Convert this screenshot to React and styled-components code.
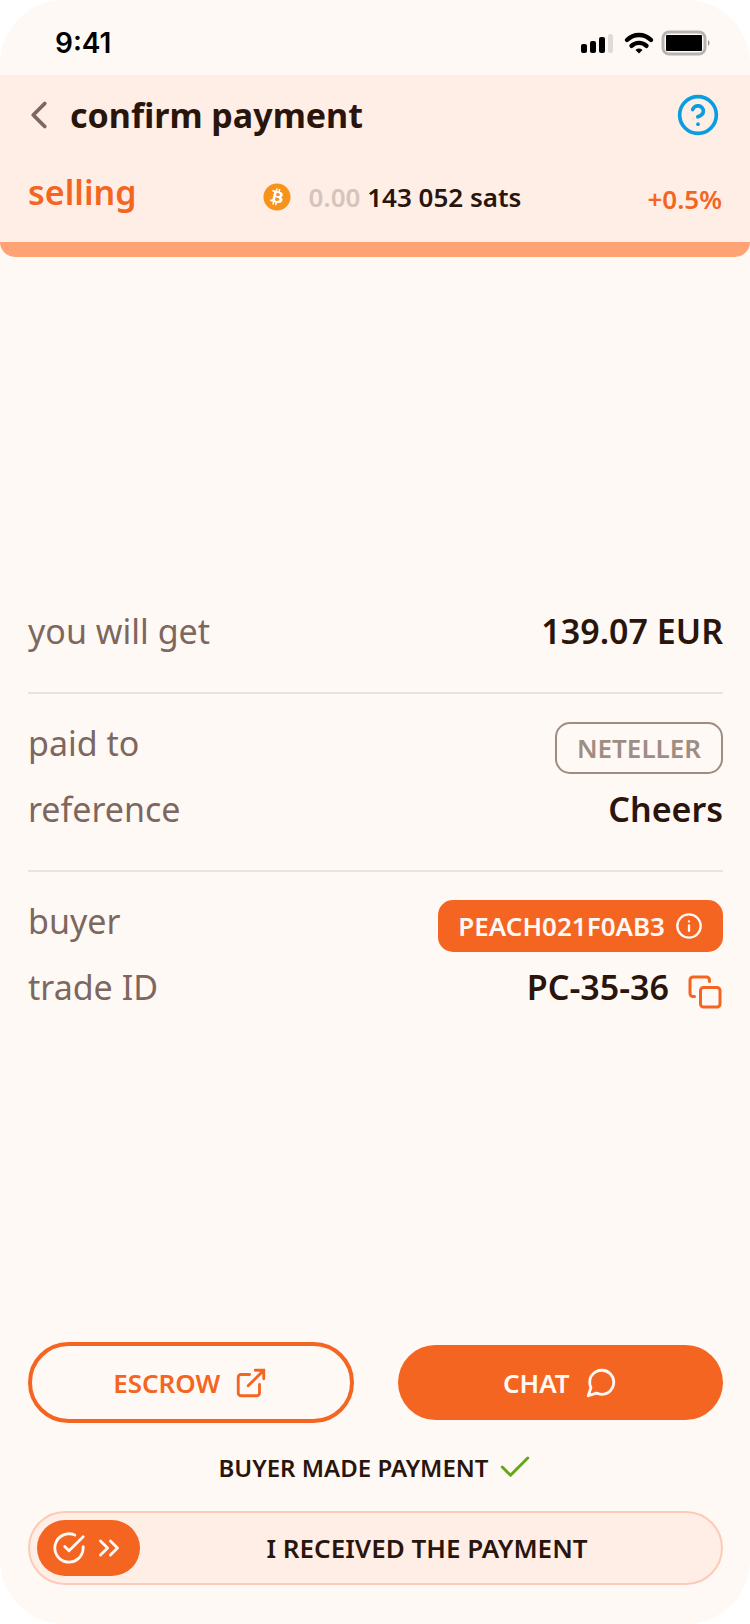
import React, { useState } from "react";
import styled, { createGlobalStyle } from "styled-components";
import { FaBitcoin } from "react-icons/fa";

const SLIDE_RANGE = 574;

const Icon = ({ size, weight = 2, children }) => (
  <svg
    width={size}
    height={size}
    viewBox="0 0 24 24"
    fill="none"
    stroke="currentColor"
    strokeWidth={weight}
    strokeLinecap="round"
    strokeLinejoin="round"
    aria-hidden="true"
  >
    {children}
  </svg>
);

const StatusIcons = () => (
  <svg width="132" height="28" viewBox="0 0 132 28" aria-hidden="true">
    <rect x="1" y="15" width="6" height="9" rx="2" />
    <rect x="10" y="12" width="6" height="12" rx="2" />
    <rect x="19" y="8" width="6" height="16" rx="2" />
    <rect x="28" y="5" width="5" height="19" rx="2" fill="#e0dbd8" />
    <g fill="none" stroke="#000" strokeWidth="4.400">
      <path d="M47 11a17 17 0 0 1 24 0" strokeLinecap="round" />
      <path d="M51.500 16.800a11 11 0 0 1 15 0" strokeLinecap="round" />
    </g>
    <path d="M55.500 21a5.500 5.500 0 0 1 7 0L59 24.500z" />
    <rect x="83" y="3" width="42" height="22" rx="6" fill="#fff9f5" stroke="#b7b3b1" strokeWidth="3" />
    <rect x="86" y="6" width="36" height="16" rx="1" />
    <path d="M128 11q3 3 0 6z" fill="#8e8a88" />
  </svg>
);

const App = () => {
  const [slide, setSlide] = useState(0);

  return (
    <Screen>
      <GlobalStyle />
      <StatusBar>
        <Time>9:41</Time>
        <StatusIcons />
      </StatusBar>

      <Header>
        <TitleRow>
          <IconButton aria-label="back" $color="#7d675e">
            <Icon size={46}>
              <path d="M15 18l-6-6 6-6" />
            </Icon>
          </IconButton>
          <Title>confirm payment</Title>
          <IconButton aria-label="help" $color="#099de2">
            <Icon size={44}>
              <circle cx="12" cy="12" r="10" />
              <path d="M9.090 9a3 3 0 0 1 5.830 1c0 2-3 3-3 3" />
              <path d="M12 17h.01" />
            </Icon>
          </IconButton>
        </TitleRow>
        <OfferRow>
          <Selling>selling</Selling>
          <Amount>
            <Coin>
              <FaBitcoin size={28} />
            </Coin>
            <Sats>
              <Faded>0.00</Faded> 143 052 sats
            </Sats>
          </Amount>
          <Premium>+0.5%</Premium>
        </OfferRow>
      </Header>

      <Main>
        <Section>
          <Row>
            <Label>you will get</Label>
            <Value>139.07 EUR</Value>
          </Row>
        </Section>
        <Section>
          <Row>
            <Label>paid to</Label>
            <Tag>NETELLER</Tag>
          </Row>
          <Row>
            <Label>reference</Label>
            <Value>Cheers</Value>
          </Row>
        </Section>
        <Section>
          <Row>
            <Label>buyer</Label>
            <BuyerButton>
              PEACH021F0AB3
              <Icon size={28}>
                <circle cx="12" cy="12" r="10" />
                <path d="M12 16v-4.500M12 8h.01" />
              </Icon>
            </BuyerButton>
          </Row>
          <Row>
            <Label>trade ID</Label>
            <Trade>
              <Value>PC-35-36</Value>
              <IconButton aria-label="copy trade ID" $color="#f56522">
                <Icon size={36}>
                  <rect x="9" y="9" width="13" height="13" rx="2" />
                  <path d="M5 15H4a2 2 0 0 1-2-2V4a2 2 0 0 1 2-2h9a2 2 0 0 1 2 2v1" />
                </Icon>
              </IconButton>
            </Trade>
          </Row>
        </Section>
      </Main>

      <Footer>
        <Actions>
          <ActionButton $outline>
            ESCROW
            <Icon size={34}>
              <path d="M18 13v6a2 2 0 0 1-2 2H5a2 2 0 0 1-2-2V8a2 2 0 0 1 2-2h6" />
              <path d="M15 3h6v6M10 14L21 3" strokeLinejoin="miter" />
            </Icon>
          </ActionButton>
          <ActionButton>
            CHAT
            <Icon size={34}>
              <path d="M21 11.500a8.380 8.380 0 0 1-.9 3.800 8.500 8.500 0 0 1-7.600 4.700 8.380 8.380 0 0 1-3.800-.9L3 21l1.900-5.700a8.380 8.380 0 0 1-.9-3.800 8.500 8.500 0 0 1 4.700-7.600 8.380 8.380 0 0 1 3.800-.9h.5a8.480 8.480 0 0 1 8 8v.5z" />
            </Icon>
          </ActionButton>
        </Actions>
        <Note>
          BUYER MADE PAYMENT
          <Check>
            <Icon size={36}>
              <path d="M20.500 6L9 17.500l-5.500-5.500" />
            </Icon>
          </Check>
        </Note>
        <Slider>
          <Thumb style={{ marginLeft: (slide / 100) * SLIDE_RANGE }}>
            <Icon size={34}>
              <path d="M22 11.080V12a10 10 0 1 1-5.930-9.140" />
              <path d="M22 4L12 14.010l-3-3" />
            </Icon>
            <Icon size={34}>
              <path d="M13 17l5-5-5-5M6 17l5-5-5-5" />
            </Icon>
          </Thumb>
          <SlideLabel htmlFor="received">I RECEIVED THE PAYMENT</SlideLabel>
          <SlideInput
            id="received"
            type="range"
            min="0"
            max="100"
            value={slide}
            onChange={(e) => setSlide(Number(e.target.value))}
          />
        </Slider>
      </Footer>
    </Screen>
  );
};

const GlobalStyle = createGlobalStyle`
  * {
    box-sizing: border-box;
  }
  body {
    margin: 0;
    background: #fff;
    color: #29150c;
    font-family: "Noto Sans", "Open Sans", sans-serif;
  }
  button {
    font: inherit;
    cursor: pointer;
  }
  svg {
    display: block;
    flex-shrink: 0;
  }
`;

const Screen = styled.div`
  display: flex;
  flex-direction: column;
  min-height: 100vh;
  overflow: hidden;
  border-radius: 64px;
  background: #fff9f5;
`;

const StatusBar = styled.div`
  display: flex;
  align-items: center;
  justify-content: space-between;
  height: 75px;
  padding: 10px 38px 0 55px;
`;

const Time = styled.span`
  color: #000;
  font-family: Inter, sans-serif;
  font-size: 28px;
  font-weight: 600;
`;

const Header = styled.header`
  border-bottom: 15px solid #ffa274;
  border-radius: 0 0 15px 15px;
  background: #ffeee6;
`;

const TitleRow = styled.div`
  display: flex;
  align-items: center;
  gap: 8px;
  height: 80px;
  padding: 0 30px 0 16px;
`;

const Title = styled.h1`
  flex: 1;
  margin: 0;
  font-size: 34px;
  font-weight: 700;
  line-height: 40px;
`;

const IconButton = styled.button`
  padding: 0;
  border: 0;
  background: none;
  color: ${(props) => props.$color};
`;

const OfferRow = styled.div`
  display: flex;
  align-items: flex-start;
  justify-content: space-between;
  height: 87px;
  padding: 16px 28px 0;
`;

const Selling = styled.span`
  color: #f56522;
  font-size: 34px;
  font-weight: 600;
  line-height: 42px;
`;

const Amount = styled.div`
  display: flex;
  align-items: center;
  gap: 18px;
`;

const Coin = styled.span`
  border-radius: 50%;
  background: radial-gradient(circle, #fff 55%, transparent 56%);
  color: #f7931a;
`;

const Sats = styled.span`
  font-size: 26px;
  font-weight: 600;
  line-height: 52px;
`;

const Faded = styled.span`
  color: #d5c4bc;
`;

const Premium = styled.span`
  color: #f56522;
  font-size: 26px;
  font-weight: 600;
  line-height: 56px;
`;

const Main = styled.main`
  display: flex;
  flex: 1;
  flex-direction: column;
  justify-content: center;
  padding: 28px 27px 0 28px;
`;

const Section = styled.section`
  display: flex;
  flex-direction: column;
  gap: 14px;

  & + & {
    margin-top: 30px;
    padding-top: 28px;
    border-top: 2px solid #eae4e0;
  }
`;

const Row = styled.div`
  display: flex;
  align-items: flex-start;
  justify-content: space-between;
  height: 52px;
`;

const Label = styled.span`
  color: #7d675e;
  font-size: 34px;
  line-height: 42px;
`;

const Value = styled.span`
  font-size: 34px;
  font-weight: 600;
  line-height: 42px;
`;

const Tag = styled.span`
  padding: 0 20px;
  border: 2px solid #9f8c82;
  border-radius: 15px;
  color: #9f8c82;
  font-size: 26px;
  font-weight: 600;
  line-height: 48px;
`;

const BuyerButton = styled.button`
  display: flex;
  align-items: center;
  gap: 10px;
  height: 52px;
  padding: 0 20px;
  border: 0;
  border-radius: 15px;
  background: #f56522;
  color: #fff9f5;
  font-size: 26px;
  font-weight: 600;
`;

const Trade = styled.div`
  display: flex;
  gap: 18px;
  height: 100%;
`;

const Footer = styled.footer`
  padding: 0 27px 39px 28px;
`;

const Actions = styled.div`
  display: grid;
  grid-template-columns: 1fr 1fr;
  align-items: center;
  gap: 44px;
`;

const ActionButton = styled.button`
  display: flex;
  align-items: center;
  justify-content: center;
  gap: 14px;
  height: ${(props) => (props.$outline ? "81px" : "75px")};
  border: ${(props) => (props.$outline ? "4px solid #f56522" : "0")};
  border-radius: 41px;
  background: ${(props) => (props.$outline ? "transparent" : "#f56522")};
  color: ${(props) => (props.$outline ? "#f56522" : "#fff9f5")};
  font-size: 26px;
  font-weight: 600;
`;

const Note = styled.p`
  display: flex;
  align-items: center;
  justify-content: center;
  gap: 8px;
  height: 88px;
  margin: 0;
  font-size: 24px;
  font-weight: 600;
`;

const Check = styled.span`
  color: #65a519;
`;

const Slider = styled.div`
  position: relative;
  display: flex;
  align-items: center;
  height: 74px;
  padding: 0 7px;
  border: 2px solid #fccab5;
  border-radius: 37px;
  background: #ffeee6;
`;

const Thumb = styled.span`
  display: flex;
  align-items: center;
  gap: 6px;
  height: 56px;
  padding: 0 14px 0 15px;
  border-radius: 28px;
  background: #f56522;
  color: #fff9f5;
`;

const SlideLabel = styled.label`
  flex: 1;
  font-size: 26px;
  font-weight: 600;
  text-align: center;
  white-space: nowrap;
`;

const SlideInput = styled.input`
  position: absolute;
  inset: 0;
  width: 100%;
  height: 100%;
  margin: 0;
  opacity: 0;
  cursor: pointer;
`;

export default App;
